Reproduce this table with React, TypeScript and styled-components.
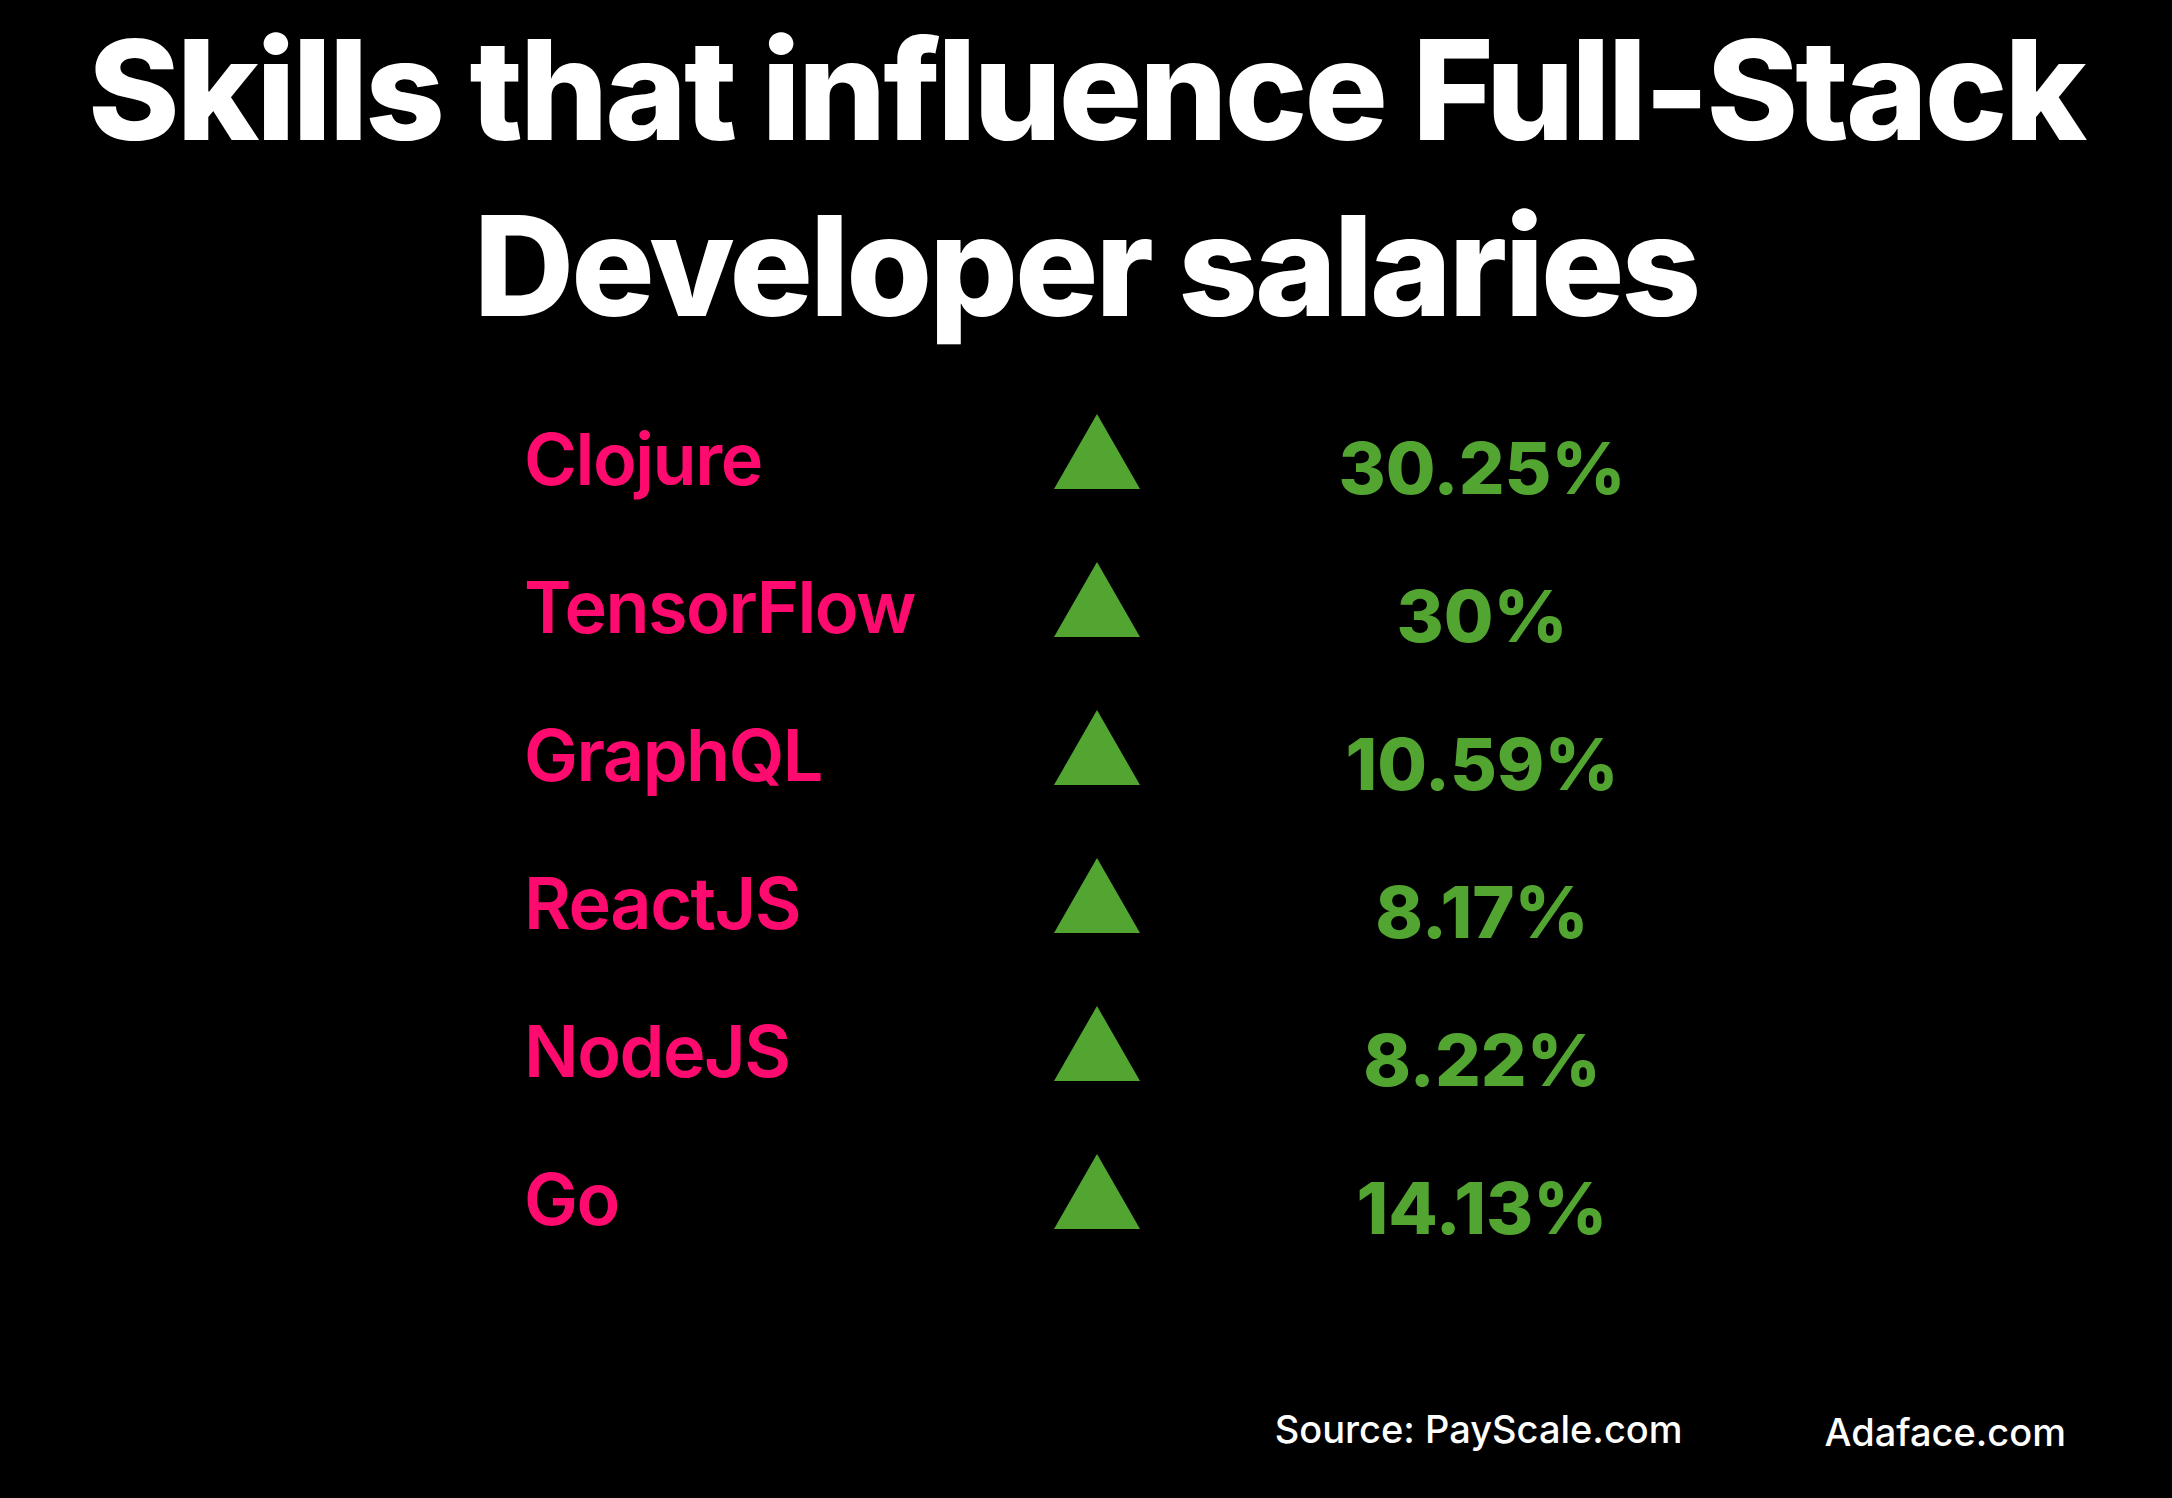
import React from 'react'
import styled, { createGlobalStyle } from 'styled-components'

const GlobalStyle = createGlobalStyle`
  html, body {
    margin: 0;
    padding: 0;
    background: #000;
  }
`

const skills = [
  { name: 'Clojure', value: '30.25%' },
  { name: 'TensorFlow', value: '30%' },
  { name: 'GraphQL', value: '10.59%' },
  { name: 'ReactJS', value: '8.17%' },
  { name: 'NodeJS', value: '8.22%' },
  { name: 'Go', value: '14.13%' },
]

const UpArrow = () => (
  <svg width="86" height="75" viewBox="0 0 86 75">
    <polygon points="43,0 86,75 0,75" fill="#53a532" />
  </svg>
)

const App = () => {
  return (
    <Page>
      <GlobalStyle />
      <Title>
        Skills that influence Full-Stack
        <br />
        Developer salaries
      </Title>

      <Table>
        {skills.map((s) => (
          <Row key={s.name}>
            <Skill>{s.name}</Skill>
            <Arrow>
              <UpArrow />
            </Arrow>
            <Percent>{s.value}</Percent>
          </Row>
        ))}
      </Table>

      <Footer>
        <Source>Source: PayScale.com</Source>
        <Brand>Adaface.com</Brand>
      </Footer>
    </Page>
  )
}

export default App

const Page = styled.div`
  width: 2172px;
  height: 1498px;
  background: #000;
  display: flex;
  flex-direction: column;
  font-family: Inter, 'Liberation Sans', sans-serif;
  overflow: hidden;
`

const Title = styled.h1`
  margin: 0;
  padding-top: 2px;
  color: #fff;
  text-align: center;
  font-size: 139px;
  font-weight: 800;
  line-height: 176px;
  letter-spacing: -3px;
`

const Table = styled.div`
  margin-top: 46px;
  display: flex;
  flex-direction: column;
`

const Row = styled.div`
  height: 148px;
  display: grid;
  grid-template-columns: 530px 86px 684px;
  padding-left: 524px;
  align-items: start;
`

const Skill = styled.div`
  padding-top: 23px;
  color: #ff0a6e;
  font-size: 72px;
  font-weight: 600;
  line-height: 72px;
  letter-spacing: -1.5px;
  white-space: nowrap;
`

const Arrow = styled.div`
  padding-top: 14px;
  display: flex;

  svg {
    display: block;
  }
`

const Percent = styled.div`
  padding-top: 32px;
  color: #53a532;
  text-align: center;
  font-size: 72px;
  font-weight: 800;
  line-height: 72px;
`

const Footer = styled.div`
  margin-top: 122px;
  display: flex;
  justify-content: flex-end;
  align-items: flex-start;
  gap: 142px;
  padding-right: 106px;
  color: #fff;
  font-weight: 500;
`

const Source = styled.div`
  font-size: 38px;
  line-height: 38px;
`

const Brand = styled.div`
  margin-top: 3px;
  font-size: 38px;
  line-height: 38px;
`
